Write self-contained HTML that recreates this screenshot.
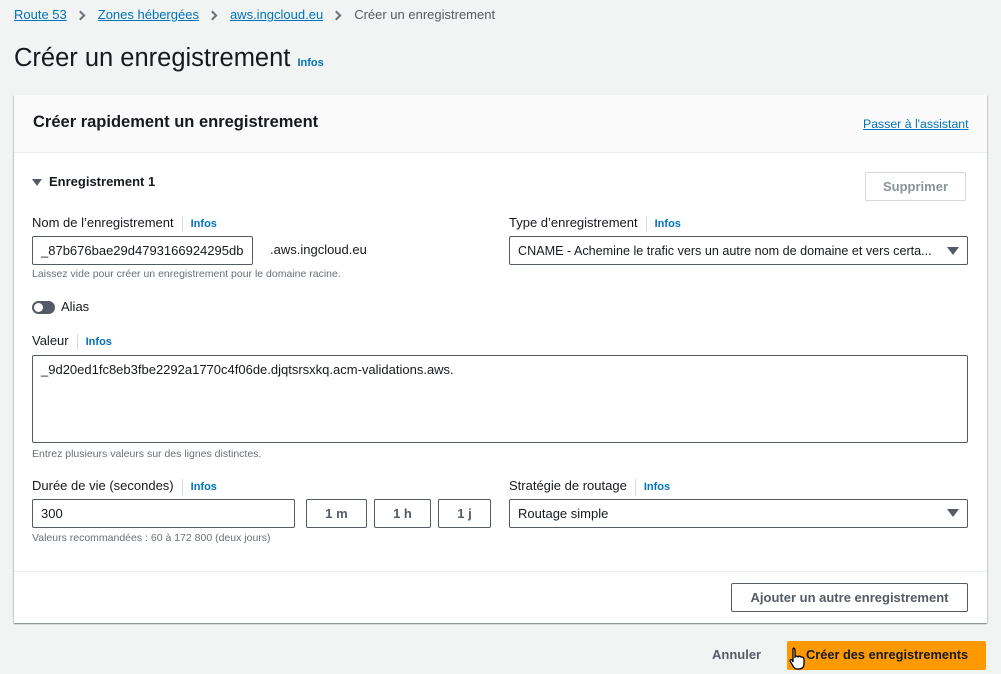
<!DOCTYPE html>
<html><head><meta charset="utf-8"><style>
*{box-sizing:border-box;margin:0;padding:0}
body{width:1001px;height:674px;background:#f2f3f3;font-family:"Liberation Sans",Arial,sans-serif;color:#16191f;position:relative;overflow:hidden;font-size:13px}
.a{position:absolute;white-space:nowrap}
.lnk{color:#0073bb;text-decoration:underline}
.info{color:#0073bb;font-weight:bold;font-size:11px}
.sep{display:inline-block;width:1px;height:16px;background:#d5dbdb;vertical-align:middle;margin:0 8px 0 8px}
.inp{position:absolute;border:1px solid #545b64;background:#fff;border-radius:2px;padding-left:8px;font-size:13px;display:flex;align-items:center}
.btn{position:absolute;border:1px solid #545b64;background:#fff;border-radius:2px;font-weight:bold;color:#545b64;display:flex;align-items:center;justify-content:center;font-size:13px}
.hint{font-size:10.5px;color:#687078}
.tri{position:absolute;width:0;height:0;border-left:6px solid transparent;border-right:6px solid transparent;border-top:8px solid #545b64}
.chev{display:inline-block;width:7px;height:7px;border-top:2px solid #687078;border-right:2px solid #687078;transform:rotate(45deg);margin:0 14px 1px 10px;vertical-align:middle}
</style></head><body>
<div class="a" style="left:14px;top:7px;font-size:13px"><span class="lnk">Route 53</span><span class="chev"></span><span class="lnk">Zones hébergées</span><span class="chev"></span><span class="lnk">aws.ingcloud.eu</span><span class="chev"></span><span style="color:#545b64">Créer un enregistrement</span></div>
<div class="a" style="left:14px;top:44px;font-size:25.5px">Créer un enregistrement <span class="info" style="font-size:11px">Infos</span></div>

<div class="a" style="left:14px;top:95px;width:973px;height:528px;background:#fff;box-shadow:0 1px 1px rgba(0,28,36,.3),1px 1px 1px rgba(0,28,36,.15),-1px 1px 1px rgba(0,28,36,.15)"></div>
<div class="a" style="left:14px;top:95px;width:973px;height:58px;background:#fafafa;border-bottom:1px solid #eaeded"></div>
<div class="a" style="left:33px;top:113px;font-size:16.5px;font-weight:bold">Créer rapidement un enregistrement</div>
<div class="a lnk" style="left:863px;top:117px;font-size:12.3px">Passer à l'assistant</div>

<div class="tri" style="left:32px;top:179px;border-left-width:5px;border-right-width:5px;border-top-width:7px"></div>
<div class="a" style="left:49px;top:174px;font-weight:bold;font-size:13px">Enregistrement 1</div>
<div class="btn" style="left:865px;top:172px;width:101px;height:29px;border-color:#d5dbdb;color:#879596">Supprimer</div>

<div class="a" style="left:32px;top:215px">Nom de l’enregistrement<span class="sep"></span><span class="info">Infos</span></div>
<div class="inp" style="left:32px;top:236px;width:221px;height:29px">_87b676bae29d4793166924295db</div>
<div class="a" style="left:270px;top:242px">.aws.ingcloud.eu</div>
<div class="a hint" style="left:32px;top:268px">Laissez vide pour créer un enregistrement pour le domaine racine.</div>
<div class="a" style="left:32px;top:301px;width:23px;height:13px;border-radius:7px;background:#545b64"></div>
<div class="a" style="left:34px;top:303px;width:9px;height:9px;border-radius:50%;background:#fff"></div>
<div class="a" style="left:61px;top:299px">Alias</div>

<div class="a" style="left:509px;top:215px">Type d’enregistrement<span class="sep"></span><span class="info">Infos</span></div>
<div class="inp" style="left:509px;top:236px;width:459px;height:29px;font-size:12.6px">CNAME - Achemine le trafic vers un autre nom de domaine et vers certa...</div>
<div class="tri" style="left:947px;top:247px"></div>

<div class="a" style="left:32px;top:333px">Valeur<span class="sep"></span><span class="info">Infos</span></div>
<div class="inp" style="left:32px;top:355px;width:936px;height:88px;align-items:flex-start;padding-top:6px">_9d20ed1fc8eb3fbe2292a1770c4f06de.djqtsrsxkq.acm-validations.aws.</div>
<div class="a hint" style="left:32px;top:448px">Entrez plusieurs valeurs sur des lignes distinctes.</div>

<div class="a" style="left:32px;top:478px">Durée de vie (secondes)<span class="sep"></span><span class="info">Infos</span></div>
<div class="inp" style="left:32px;top:499px;width:263px;height:29px">300</div>
<div class="btn" style="left:306px;top:499px;width:61px;height:29px">1 m</div>
<div class="btn" style="left:374px;top:499px;width:57px;height:29px">1 h</div>
<div class="btn" style="left:438px;top:499px;width:53px;height:29px">1 j</div>
<div class="a hint" style="left:32px;top:532px">Valeurs recommandées : 60 à 172 800 (deux jours)</div>

<div class="a" style="left:509px;top:478px">Stratégie de routage<span class="sep"></span><span class="info">Infos</span></div>
<div class="inp" style="left:509px;top:499px;width:459px;height:29px">Routage simple</div>
<div class="tri" style="left:947px;top:509px"></div>

<div class="a" style="left:14px;top:571px;width:973px;height:1px;background:#eaeded"></div>
<div class="btn" style="left:731px;top:583px;width:237px;height:29px">Ajouter un autre enregistrement</div>

<div class="a" style="left:712px;top:647px;font-weight:bold;color:#545b64">Annuler</div>
<div class="a" style="left:787px;top:641px;width:199px;height:29px;background:#ff9900;border-radius:2px"></div>
<div class="a" style="left:806px;top:647px;font-weight:bold;font-size:12.8px">Créer des enregistrements</div>
<svg class="a" style="left:789px;top:646px" width="18" height="24" viewBox="0 0 18 24"><path d="M4 2c1 0 2 1 2 2v7l1-1c1 0 2 1 2 1l1-1c1 0 2 1 2 1l1 0c1 0 2 1 2 2v5c0 3-2 5-5 5H8c-2 0-3-1-4-3l-3-5c0-1 1-2 2-1l1 2V4c0-1 0-2 1-2z" fill="#fff" stroke="#000" stroke-width="1.3"/></svg>
</body></html>
